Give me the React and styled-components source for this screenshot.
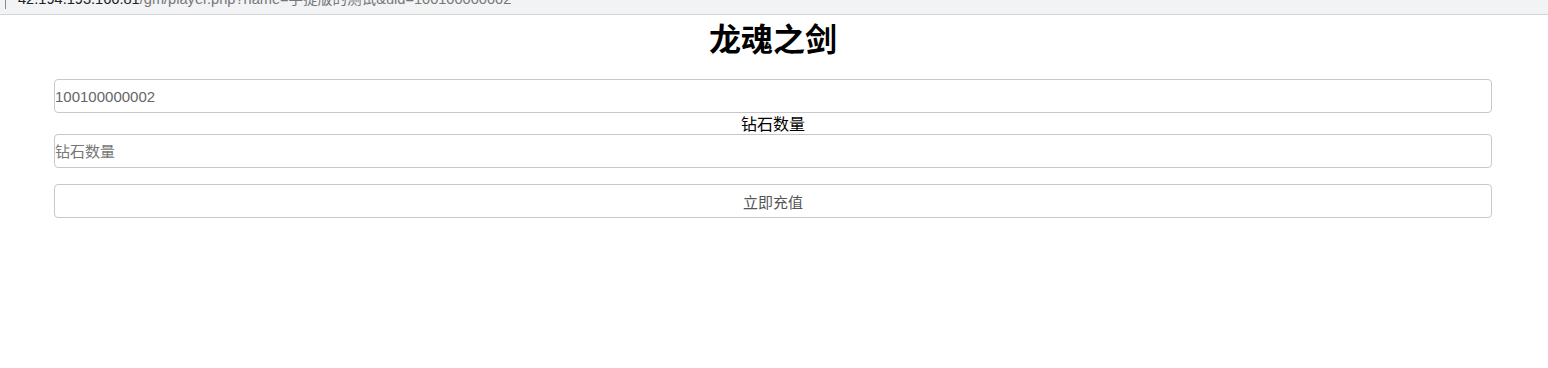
import React from 'react'
import styled, { createGlobalStyle } from 'styled-components'

const GlobalStyle = createGlobalStyle`
  body {
    margin: 0;
    background: #fff;
    font-family: "Liberation Sans", "Noto Sans CJK SC", sans-serif;
  }
`

const AddressBar = styled.div`
  height: 14px;
  background: #f1f3f4;
  border-bottom: 1px solid #d3d3d3;
  overflow: hidden;
  display: flex;
  align-items: flex-end;
  padding-left: 5px;
  gap: 12px;
`

const Divider = styled.span`
  align-self: flex-start;
  width: 1px;
  height: 9px;
  background: #8a8a8a;
`

const Url = styled.span`
  font-size: 14.6px;
  line-height: 15px;
  color: #777;
  white-space: nowrap;
  margin-bottom: 7px;

  b {
    font-weight: normal;
    color: #202124;
  }
`

const Page = styled.div`
  padding: 0 56px 0 54px;
  display: flex;
  flex-direction: column;
  align-items: stretch;
`

const Title = styled.h1`
  margin: 2px 0 22px;
  font-size: 32px;
  line-height: 40px;
  font-weight: bold;
  text-align: center;
  color: #000;
  font-family: "Noto Sans CJK SC", sans-serif;
`

const Field = styled.input`
  box-sizing: border-box;
  width: 100%;
  height: 34px;
  margin: 0;
  padding: 0;
  border: 1px solid #c8c8c8;
  border-radius: 4px;
  background: #fff;
  font-family: "Liberation Sans", "Noto Sans CJK SC", sans-serif;
  font-size: 15px;
  color: #666;
  outline: none;

  &::placeholder {
    color: #777;
  }
`

const Label = styled.label`
  display: block;
  text-align: center;
  font-size: 16px;
  line-height: 21px;
  color: #000;
  font-family: "Noto Sans CJK SC", sans-serif;
`

const Submit = styled.button`
  box-sizing: border-box;
  width: 100%;
  height: 34px;
  margin-top: 16px;
  border: 1px solid #c8c8c8;
  border-radius: 4px;
  background: #fff;
  font-family: "Noto Sans CJK SC", sans-serif;
  font-size: 15px;
  color: #555;
  cursor: pointer;
`

export default function App() {
  return (
    <>
      <GlobalStyle />
      <AddressBar>
        <Divider />
        <Url>
          <b>42.194.193.166:81</b>/gm/player.php?name=手提版的测试&amp;uid=100100000002
        </Url>
      </AddressBar>
      <Page>
        <Title>龙魂之剑</Title>
        <Field defaultValue="100100000002" />
        <Label>钻石数量</Label>
        <Field placeholder="钻石数量" />
        <Submit>立即充值</Submit>
      </Page>
    </>
  )
}
